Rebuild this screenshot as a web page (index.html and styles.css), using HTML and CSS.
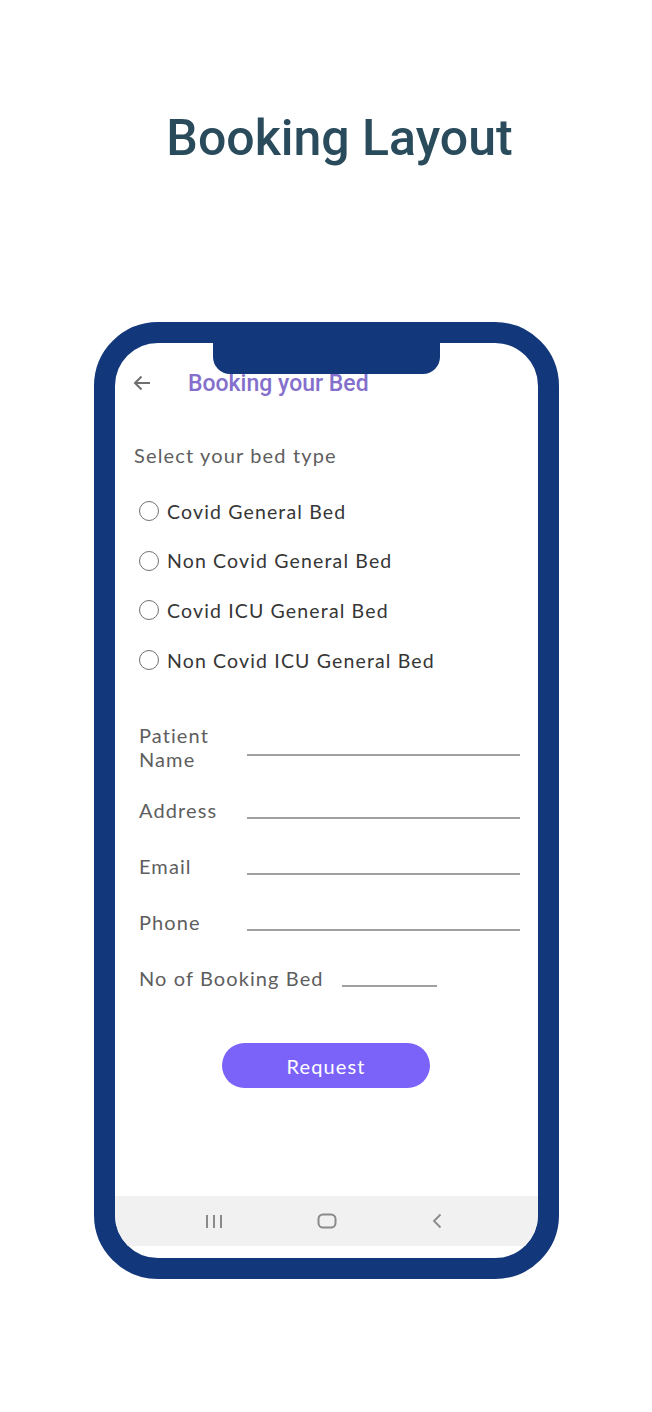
FILE: index.html
```html
<!DOCTYPE html>
<html>
<head>
<meta charset="utf-8">
<link rel="stylesheet" href="styles.css">
</head>
<body>
<h1 class="title">Booking Layout</h1>
<div class="phone">
  <div class="notch"></div>
  <div class="screen">
    <header class="appbar">
      <svg class="back" width="18" height="16" viewBox="0 0 18 16"><path d="M17 8H2M8.5 1.5L2 8l6.5 6.5" fill="none" stroke="#6f6f6f" stroke-width="2"/></svg>
      <span class="appbar-title">Booking your Bed</span>
    </header>
    <p class="prompt">Select your bed type</p>
    <ul class="radios">
      <li class="radio"><span class="dot"></span>Covid General Bed</li>
      <li class="radio"><span class="dot"></span>Non Covid General Bed</li>
      <li class="radio"><span class="dot"></span>Covid ICU General Bed</li>
      <li class="radio"><span class="dot"></span>Non Covid ICU General Bed</li>
    </ul>
    <div class="fields">
      <div class="field field-tall"><span class="label">Patient<br>Name</span><span class="line"></span></div>
      <div class="field"><span class="label">Address</span><span class="line"></span></div>
      <div class="field"><span class="label">Email</span><span class="line"></span></div>
      <div class="field"><span class="label">Phone</span><span class="line"></span></div>
      <div class="field field-short"><span class="label">No of Booking Bed</span><span class="line short"></span></div>
    </div>
    <div class="action"><button class="request">Request</button></div>
    <div class="grow"></div>
    <nav class="navbar">
      <svg width="18" height="15" viewBox="0 0 18 15"><path d="M2 1v13M9 1v13M16 1v13" stroke="#8a8a8a" stroke-width="2"/></svg>
      <svg width="20" height="16" viewBox="0 0 20 16"><rect x="1.5" y="1.5" width="17" height="13" rx="4.5" fill="none" stroke="#8a8a8a" stroke-width="2"/></svg>
      <svg width="12" height="16" viewBox="0 0 12 16"><path d="M9.5 1.5L3 8l6.5 6.5" fill="none" stroke="#8a8a8a" stroke-width="1.8"/></svg>
    </nav>
    <div class="chin"></div>
  </div>
</div>
</body>
</html>
```
FILE: styles.css
```css
* { box-sizing: border-box; }
html, body { margin: 0; padding: 0; background: #ffffff; }
body { width: 652px; height: 1412px; overflow: hidden; }

.title {
  margin: 109px 0 0 0;
  padding-left: 27px;
  text-align: center;
  font-family: Roboto, "Liberation Sans", sans-serif;
  font-weight: 500;
  font-size: 50px;
  line-height: 58px;
  color: #294b5b;
}

.phone {
  position: relative;
  margin: 155px 0 0 94px;
  width: 465px;
  height: 957px;
  border: 21px solid #13377b;
  border-radius: 64px;
  background: #ffffff;
}

.notch {
  position: absolute;
  top: -2px;
  left: 98px;
  width: 227px;
  height: 33px;
  background: #13377b;
  border-radius: 0 0 17px 17px;
  z-index: 2;
}

.screen {
  height: 100%;
  border-radius: 43px;
  overflow: hidden;
  display: flex;
  flex-direction: column;
  font-family: "Lato", "Open Sans", sans-serif;
}

.appbar {
  display: flex;
  align-items: center;
  height: 20px;
  margin-top: 30px;
  padding-left: 18px;
}
.back { display: block; }
.appbar-title {
  margin-left: 37px;
  font-family: Roboto, sans-serif;
  font-weight: 500;
  font-size: 23px;
  color: #8470cc;
}

.prompt {
  margin: 50px 0 0 19px;
  font-size: 20px;
  line-height: 24px;
  color: #5e5e5e;
  letter-spacing: 1.15px;
}

.radios {
  list-style: none;
  margin: 32px 0 0 24px;
  padding: 0;
  display: flex;
  flex-direction: column;
  gap: 25.7px;
}
.radio {
  display: flex;
  align-items: center;
  height: 24px;
  font-size: 19.5px;
  color: #363636;
  letter-spacing: 1.15px;
}
.dot {
  width: 20px;
  height: 20px;
  border: 1.8px solid #707070;
  border-radius: 50%;
  margin-right: 8px;
  flex: none;
}

.fields {
  margin: 51px 0 0 24px;
  display: flex;
  flex-direction: column;
  gap: 32px;
}
.field {
  display: flex;
  align-items: center;
  height: 24px;
  font-size: 20px;
  color: #5e5e5e;
  letter-spacing: 1.1px;
}
.field-tall { height: 48px; margin-bottom: -5px; }
.label {
  width: 108px;
  flex: none;
  line-height: 24px;
}
.field-short .label { width: auto; margin-right: 18px; }
.line {
  width: 273px;
  height: 1.5px;
  margin-top: 16px;
  background: #a0a0a0;
}
.line.short { width: 95px; }

.action {
  margin-top: 53px;
  padding-left: 107px;
}
.request {
  width: 208px;
  height: 45px;
  border: none;
  border-radius: 23px;
  background: #7b63fa;
  color: #ffffff;
  font-family: "Lato", "Open Sans", sans-serif;
  font-size: 20px;
  letter-spacing: 1.1px;
}

.grow { flex: 1; }

.navbar {
  height: 50px;
  background: #f1f1f1;
  display: flex;
  align-items: center;
  justify-content: space-between;
  padding: 0 95px 0 90px;
  flex: none;
}
.chin { height: 12px; flex: none; }
```
